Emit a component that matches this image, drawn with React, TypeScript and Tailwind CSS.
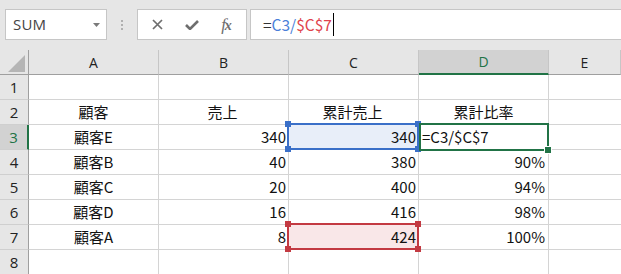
import React from "react";

const cellFont = { fontFamily: '"Noto Sans CJK JP", "Noto Sans", sans-serif' };

type Row = { n: number; a: string; b: string; c: string; d: string };

const rows: Row[] = [
  { n: 1, a: "", b: "", c: "", d: "" },
  { n: 2, a: "顧客", b: "売上", c: "累計売上", d: "累計比率" },
  { n: 3, a: "顧客E", b: "340", c: "340", d: "=C3/$C$7" },
  { n: 4, a: "顧客B", b: "40", c: "380", d: "90%" },
  { n: 5, a: "顧客C", b: "20", c: "400", d: "94%" },
  { n: 6, a: "顧客D", b: "16", c: "416", d: "98%" },
  { n: 7, a: "顧客A", b: "8", c: "424", d: "100%" },
  { n: 8, a: "", b: "", c: "", d: "" },
];

function Handle({ cls, color }: { cls: string; color: string }) {
  return <div className={`absolute w-[6px] h-[6px] ${color} ${cls}`} />;
}

export default function App() {
  return (
    <div className="w-[621px] h-[274px] overflow-hidden bg-white select-none" style={cellFont}>
      {/* Formula bar */}
      <div className="h-[50px] bg-[#e6e6e6] pt-[9px] flex items-start">
        <div className="ml-[5px] w-[102px] h-[31px] bg-white border border-[#c6c6c6] flex items-center justify-between pl-[7px] pr-[6px]">
          <span className="text-[15px] text-[#444] tracking-[0.2px]" style={{ fontFamily: '"Open Sans", "Noto Sans", sans-serif' }}>SUM</span>
          <svg width="7" height="4" viewBox="0 0 7 4"><path d="M0 0 L7 0 L3.5 4 Z" fill="#7a7a7a" /></svg>
        </div>
        <div className="w-[30px] h-[31px] flex flex-col items-center justify-center gap-[2px]">
          <div className="w-[2px] h-[2px] bg-[#b0b0b0]" />
          <div className="w-[2px] h-[2px] bg-[#b0b0b0]" />
          <div className="w-[2px] h-[2px] bg-[#b0b0b0]" />
        </div>
        <div className="w-[110px] h-[31px] bg-white border border-[#c6c6c6] flex items-center">
          <div className="w-[36px] flex justify-center pl-[2px]">
            <svg width="11" height="11" viewBox="0 0 11 11">
              <path d="M1 1 L10 10 M10 1 L1 10" stroke="#6e6e6e" strokeWidth="1.7" />
            </svg>
          </div>
          <div className="w-[36px] flex justify-center">
            <svg width="14" height="10" viewBox="0 0 14 10">
              <path d="M1 5 L5 9 L13 1" stroke="#6e6e6e" strokeWidth="2.6" fill="none" />
            </svg>
          </div>
          <div className="w-[30px] flex justify-center pl-[2px]">
            <span className="italic text-[#6e6e6e] text-[17px] leading-none tracking-[-1px]" style={{ fontFamily: '"Liberation Serif", serif' }}>
              f<span className="text-[14px] font-bold">x</span>
            </span>
          </div>
        </div>
        <div className="ml-[3px] flex-1 h-[31px] bg-white border border-r-0 border-[#c6c6c6] flex items-center pl-[12px]">
          <span className="text-[15.5px] leading-none">
            <span className="text-[#333]">=</span>
            <span className="text-[#4a7fd9]">C3/</span>
            <span className="text-[#e0434d]">$C$7</span>
          </span>
          <div className="ml-[1px] w-[1px] h-[23px] bg-black" />
        </div>
      </div>

      {/* Grid */}
      <div className="relative">
        <div className="grid grid-cols-[29px_130px_130px_130px_130px_1fr] text-[15px] text-[#111]">
          {/* header row */}
          <div className="h-[25px] bg-[#e6e6e6] border-r border-b border-[#9f9f9f] relative overflow-hidden">
            <svg className="absolute left-[8px] top-[5px]" width="17" height="17" viewBox="0 0 17 17">
              <path d="M17 0 L17 17 L0 17 Z" fill="#b5b5b5" />
            </svg>
          </div>
          {["A", "B", "C", "D", "E"].map((l) => (
            <div
              key={l}
              className={`h-[25px] flex items-center justify-center text-[14px] ${
                l === "D"
                  ? "bg-[#d2d2d2] border-b-2 border-b-[#217346] border-r border-r-[#c6c6c6] text-[#217346]"
                  : "bg-[#e6e6e6] border-b border-b-[#9f9f9f] border-r border-r-[#c6c6c6] text-[#222]"
              }`}
              style={{ fontFamily: '"Open Sans", "Noto Sans", sans-serif' }}
            >
              {l}
            </div>
          ))}
          {rows.map((r) => (
            <React.Fragment key={r.n}>
              <div
                className={`h-[25px] flex items-center justify-center text-[15px] border-b border-b-[#cfcfcf] ${
                  r.n === 3
                    ? "bg-[#d2d2d2] border-r-2 border-r-[#217346] text-[#217346]"
                    : "bg-[#e6e6e6] border-r border-r-[#9f9f9f] text-[#222]"
                }`}
                style={{ fontFamily: '"Open Sans", "Noto Sans", sans-serif' }}
              >
                {r.n}
              </div>
              <div className="h-[25px] border-r border-b border-[#d4d4d4] flex items-center justify-center pt-[1px]">{r.a}</div>
              <div className={`h-[25px] border-r border-b border-[#d4d4d4] flex items-center pt-[1px] pr-[2px] ${r.n === 2 ? "justify-center" : "justify-end"}`}>{r.b}</div>
              <div
                className={`h-[25px] border-r border-b border-[#d4d4d4] flex items-center pt-[1px] pr-[2px] ${r.n === 2 ? "justify-center" : "justify-end"} ${
                  r.n === 3 ? "bg-[#e8eef9]" : r.n === 7 ? "bg-[#f9e7e8]" : ""
                }`}
              >
                {r.c}
              </div>
              <div
                className={`h-[25px] border-r border-b border-[#d4d4d4] flex items-center pt-[1px] ${
                  r.n === 2 ? "justify-center" : r.n === 3 ? "justify-start pl-[3px]" : "justify-end pr-[3px]"
                }`}
              >
                {r.d}
              </div>
              <div className="h-[25px] border-b border-[#d4d4d4]" />
            </React.Fragment>
          ))}
        </div>

        {/* C3 reference box (blue) */}
        <div className="absolute left-[287px] top-[73px] w-[132px] h-[27px] border-2 border-[#3a6fc8]">
          <Handle cls="-left-[4px] -top-[4px]" color="bg-[#3a6fc8]" />
          <Handle cls="-right-[4px] -top-[4px]" color="bg-[#3a6fc8]" />
          <Handle cls="-left-[4px] -bottom-[4px]" color="bg-[#3a6fc8]" />
          <Handle cls="-right-[4px] -bottom-[4px]" color="bg-[#3a6fc8]" />
        </div>
        {/* C7 reference box (red) */}
        <div className="absolute left-[287px] top-[173px] w-[132px] h-[27px] border-2 border-[#c33a42]">
          <Handle cls="-left-[4px] -top-[4px]" color="bg-[#c33a42]" />
          <Handle cls="-right-[4px] -top-[4px]" color="bg-[#c33a42]" />
          <Handle cls="-left-[4px] -bottom-[4px]" color="bg-[#c33a42]" />
          <Handle cls="-right-[4px] -bottom-[4px]" color="bg-[#c33a42]" />
        </div>
        {/* D3 active cell (green) */}
        <div className="absolute left-[419px] top-[73px] w-[130px] h-[28px] border-2 border-[#217346]">
          <div className="absolute -right-[4px] -bottom-[4px] w-[6px] h-[6px] bg-[#217346] ring-1 ring-white" />
        </div>
      </div>
    </div>
  );
}
